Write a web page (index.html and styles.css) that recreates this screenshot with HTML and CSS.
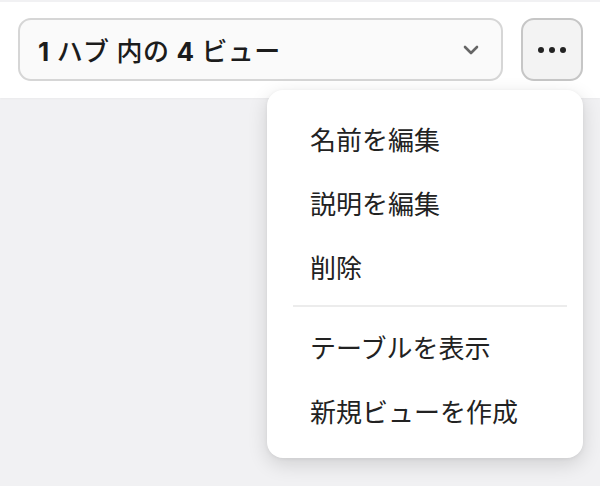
FILE: index.html
```html
<!DOCTYPE html>
<html lang="ja">
<head>
<meta charset="utf-8">
<link rel="stylesheet" href="styles.css">
</head>
<body>
<div class="page">
  <header class="header">
    <div class="select">
      <span class="label"><b class="num">1</b> ハブ 内の <b class="num">4</b> ビュー</span>
      <svg class="chev" width="16" height="10" viewBox="0 0 16 10"><path d="M2 2 L8 8 L14 2" fill="none" stroke="#666" stroke-width="2.6" stroke-linecap="round" stroke-linejoin="round"/></svg>
    </div>
    <button class="more" type="button">
      <svg width="30" height="8" viewBox="0 0 30 8"><circle cx="4" cy="4" r="3" fill="#222"/><circle cx="15" cy="4" r="3" fill="#222"/><circle cx="26" cy="4" r="3" fill="#222"/></svg>
    </button>
  </header>
  <div class="menu">
    <div class="item">名前を編集</div>
    <div class="item">説明を編集</div>
    <div class="item">削除</div>
    <div class="divider"></div>
    <div class="item">テーブルを表示</div>
    <div class="item">新規ビューを作成</div>
  </div>
</div>
</body>
</html>
```
FILE: styles.css
```css
html, body {
  margin: 0;
  padding: 0;
}
body {
  background: #f1f1f3;
  font-family: "Inter", "Noto Sans CJK JP", sans-serif;
  color: #222;
  width: 600px;
  height: 486px;
  overflow: hidden;
}
.page {
  position: relative;
  padding-top: 2px;
  height: 484px;
}
.header {
  background: #fff;
  height: 96px;
  box-sizing: border-box;
  padding: 16px 17px 0 18px;
  display: flex;
  gap: 18px;
  box-shadow: 0 1px 2px rgba(0,0,0,0.03);
}
.select {
  flex: 1;
  height: 63px;
  box-sizing: border-box;
  border: 2px solid #d6d6d6;
  border-radius: 13px;
  background: #fafafa;
  display: flex;
  align-items: center;
  padding: 0 22px 0 18px;
}
.label {
  flex: 1;
  font-size: 26px;
  font-weight: 500;
  color: #1c1c1c;
  letter-spacing: 0.3px;
}
.num {
  font-weight: 700;
}
.chev {
  display: block;
}
.more {
  width: 62px;
  height: 63px;
  box-sizing: border-box;
  border: 2px solid #c6c6c6;
  border-radius: 13px;
  background: #f3f3f3;
  display: flex;
  align-items: center;
  justify-content: center;
  padding: 0;
}
.more svg {
  display: block;
}
.menu {
  position: absolute;
  left: 267px;
  top: 90px;
  width: 316px;
  box-sizing: border-box;
  background: #fff;
  border-radius: 16px;
  box-shadow: 0 6px 20px rgba(0,0,0,0.14), 0 1px 4px rgba(0,0,0,0.06);
  padding: 16px 0;
}
.item {
  height: 64px;
  display: flex;
  align-items: center;
  padding-left: 43px;
  font-family: "Noto Sans CJK JP", sans-serif;
  font-size: 26px;
  color: #222;
}
.divider {
  height: 2px;
  background: #ececec;
  margin: 7px 16px 7px 26px;
}
```
